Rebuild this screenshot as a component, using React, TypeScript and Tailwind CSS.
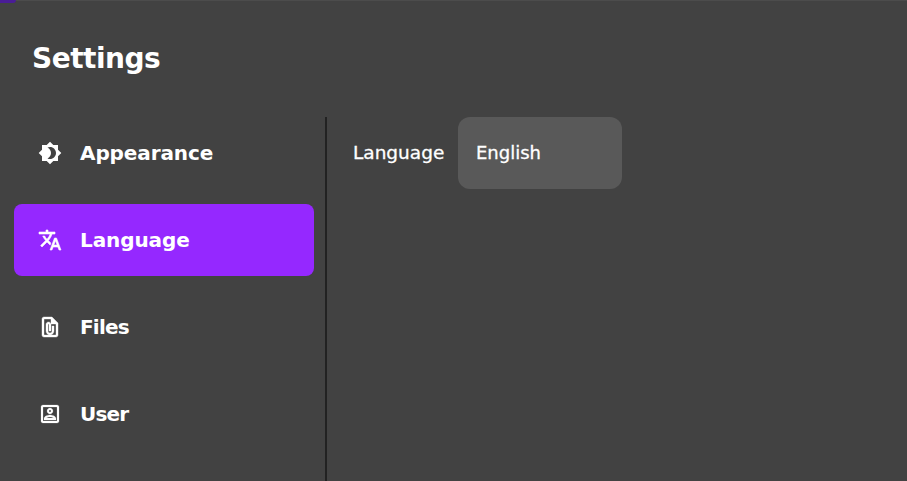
const items = [
  {
    label: "Appearance",
    iconClass: "stroke-0",
    d: "M20 8.69V4h-4.69L12 .69 8.69 4H4v4.69L.69 12 4 15.31V20h4.69L12 23.31 15.31 20H20v-4.69L23.31 12 20 8.69zM12 18c-.89 0-1.74-.2-2.5-.55C11.56 16.5 13 14.42 13 12s-1.44-4.5-3.5-5.45C10.26 6.2 11.11 6 12 6c3.31 0 6 2.69 6 6s-2.69 6-6 6z",
  },
  {
    label: "Language",
    active: true,
    iconClass: "stroke-[0.6]",
    d: "M12.87 15.07l-2.54-2.51.03-.03c1.74-1.94 2.98-4.17 3.71-6.53H17V4h-7V2H8v2H1v1.99h11.17C11.5 7.92 10.44 9.75 9 11.35 8.07 10.32 7.3 9.19 6.69 8h-2c.73 1.63 1.73 3.17 2.98 4.56l-5.09 5.02L4 19l5-5 3.11 3.11.76-2.04zM18.5 10h-2L12 22h2l1.12-3h4.75L21 22h2l-4.5-12zm-2.62 7l1.62-4.33L19.12 17h-3.24z",
  },
  {
    label: "Files",
    iconClass: "stroke-[0.4]",
    d: "M14 2H6c-1.1 0-2 .9-2 2v16c0 1.1.9 2 2 2h12c1.1 0 2-.9 2-2V8l-6-6zM6 20V4h7v5h5v11H6zm10-9h-2v5c0 1.1-.9 2-2 2s-2-.9-2-2V9.5c0-.28.22-.5.5-.5s.5.22.5.5V16h2V9.5C13 8.12 11.88 7 10.5 7S8 8.12 8 9.5V16c0 2.21 1.79 4 4 4s4-1.79 4-4v-5z",
  },
  {
    label: "User",
    iconClass: "stroke-[0.2]",
    d: "M19 5v14H5V5h14m0-2H5c-1.11 0-2 .9-2 2v14c0 1.1.89 2 2 2h14c1.1 0 2-.9 2-2V5c0-1.1-.9-2-2-2zm-7 9c-1.65 0-3-1.35-3-3s1.35-3 3-3 3 1.35 3 3-1.35 3-3 3zm0-4c-.55 0-1 .45-1 1s.45 1 1 1 1-.45 1-1-.45-1-1-1zm6 10H6v-1.53c0-2.5 3.97-3.58 6-3.58s6 1.08 6 3.58V18zm-9.69-2h7.38c-.69-.56-2.38-1.12-3.69-1.12s-3.01.56-3.69 1.12z",
  },
];

export default function App() {
  return (
    <div className="relative h-[481px] w-[907px] overflow-hidden bg-[#424242] font-['DejaVu_Sans',sans-serif] text-white">
      <div className="absolute top-0 left-0 h-[3px] w-[16px] rounded-br-full bg-[#4a1d96]" />
      <div className="flex h-full flex-col border-t border-[#4c4c4c]">
        <h1 className="px-8 pt-[38px] text-[28px] leading-[40px] font-bold tracking-[-0.5px]">Settings</h1>
        <div className="mt-[38px] flex min-h-0 flex-1">
          <nav className="flex w-[327px] flex-col gap-[15px] border-r-2 border-[#222222] px-3.5">
            {items.map(({ label, d, active, iconClass }) => (
              <div
                key={label}
                className={`flex h-[72px] w-[300px] items-center gap-[18px] rounded-lg px-6 text-[20px] font-bold ${active ? "bg-[#9528ff]" : ""}`}
              >
                <svg viewBox="0 0 24 24" className={`h-6 w-6 shrink-0 fill-current stroke-current ${iconClass}`}>
                  <path d={d} />
                </svg>
                <span className={label === "Files" || label === "User" ? "tracking-[-0.8px]" : "tracking-[-0.1px]"}>{label}</span>
              </div>
            ))}
          </nav>
          <div className="flex items-start pl-[26px]">
            <span className="mt-[25px] w-[105px] text-[18.5px] leading-[22px] [-webkit-text-stroke:0.3px_white]">Language</span>
            <div className="flex h-[72px] w-[164px] items-center rounded-xl bg-[#595959] px-[18px] text-lg [-webkit-text-stroke:0.3px_white]">
              English
            </div>
          </div>
        </div>
      </div>
    </div>
  );
}
